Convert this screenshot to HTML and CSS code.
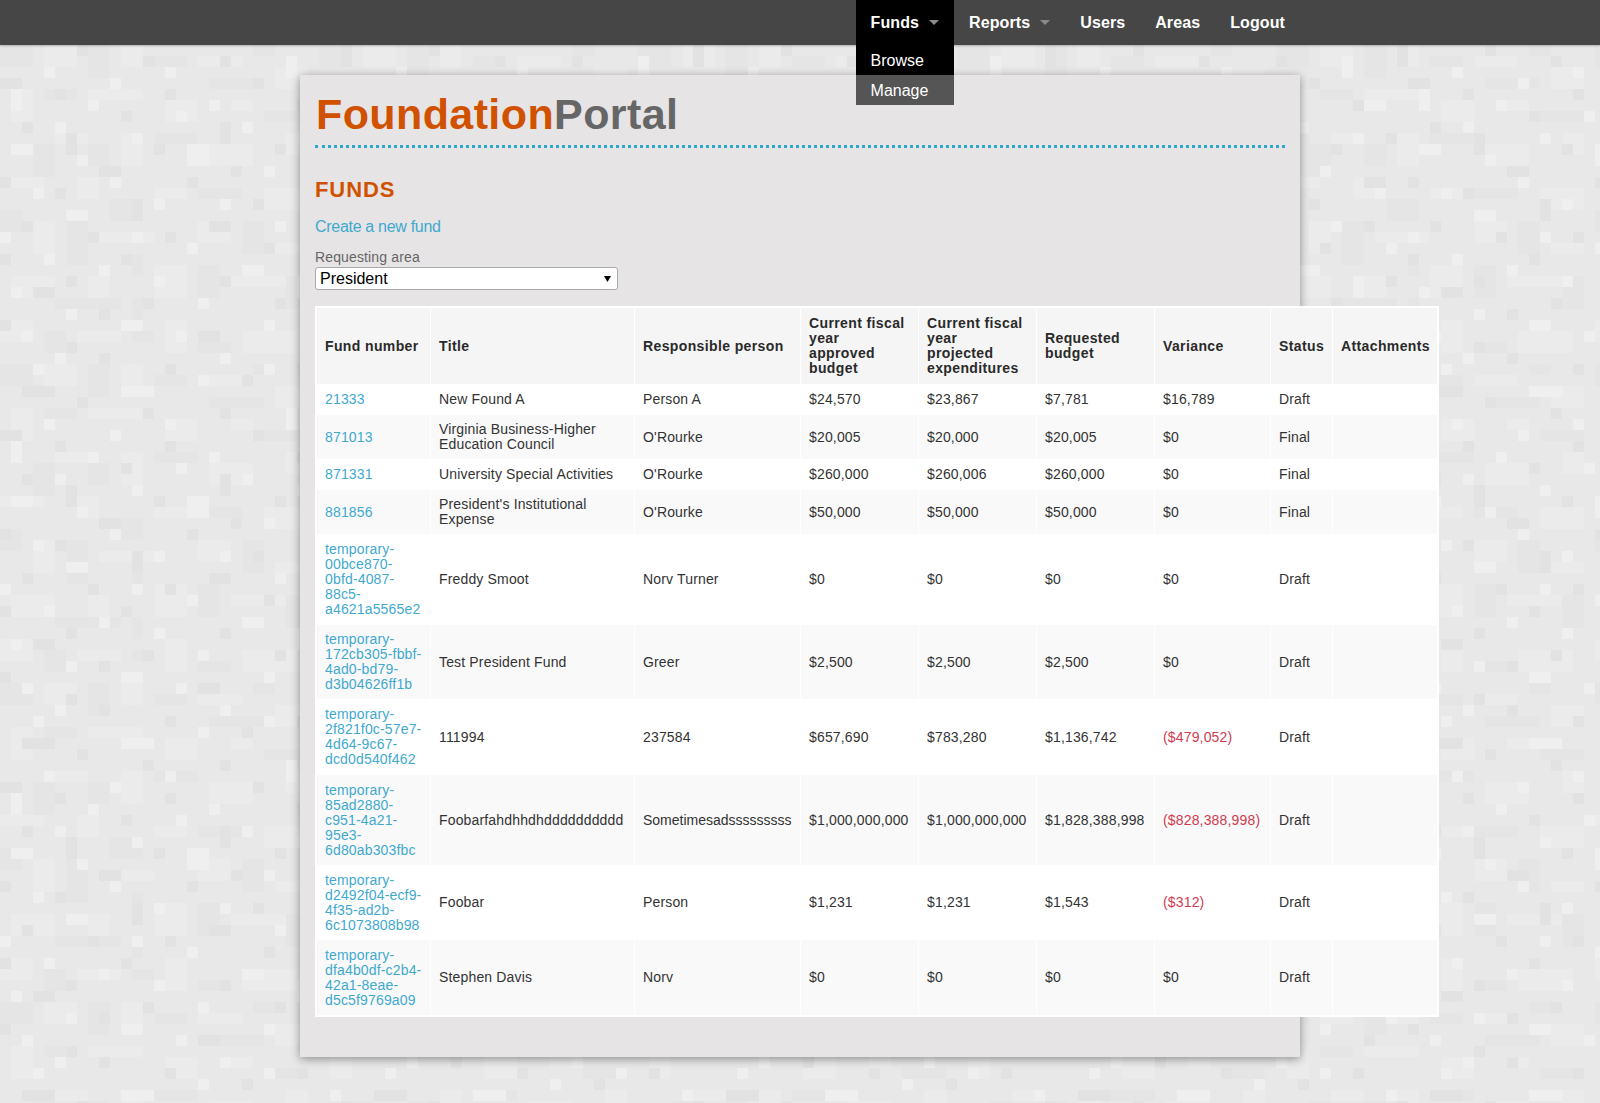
FILE: index.html
```html
<!DOCTYPE html>
<html lang="en">
<head>
<meta charset="utf-8">
<title>FoundationPortal - Funds</title>
<link rel="stylesheet" href="styles.css">
</head>
<body>
<nav class="topbar">
  <div class="topbar-inner">
    <ul class="menu">
      <li class="menu-item is-open">
        <a href="#" class="menu-link">Funds<span class="caret"></span></a>
        <ul class="dropdown">
          <li><a href="#" class="dropdown-link">Browse</a></li>
          <li><a href="#" class="dropdown-link is-hover">Manage</a></li>
        </ul>
      </li>
      <li class="menu-item"><a href="#" class="menu-link">Reports<span class="caret"></span></a></li>
      <li class="menu-item"><a href="#" class="menu-link">Users</a></li>
      <li class="menu-item"><a href="#" class="menu-link">Areas</a></li>
      <li class="menu-item"><a href="#" class="menu-link">Logout</a></li>
    </ul>
  </div>
</nav>

<main class="panel">
  <header class="brand"><span class="brand-a">Foundation</span><span class="brand-b">Portal</span></header>
  <h1 class="page-title">Funds</h1>
  <p class="create"><a href="#" class="link">Create a new fund</a></p>
  <label class="field-label" for="area">Requesting area</label>
  <select class="field-select" id="area"><option>President</option></select>

  <table class="funds">
    <colgroup>
      <col class="c1"><col class="c2"><col class="c3"><col class="c4"><col class="c5"><col class="c6"><col class="c7"><col class="c8"><col class="c9">
    </colgroup>
    <thead>
      <tr>
        <th>Fund number</th>
        <th>Title</th>
        <th>Responsible person</th>
        <th>Current fiscal<br>year<br>approved<br>budget</th>
        <th>Current fiscal<br>year<br>projected<br>expenditures</th>
        <th>Requested<br>budget</th>
        <th>Variance</th>
        <th>Status</th>
        <th>Attachments</th>
      </tr>
    </thead>
    <tbody>
      <tr class="h31"><td><a href="#" class="link">21333</a></td><td>New Found A</td><td>Person A</td><td>$24,570</td><td>$23,867</td><td>$7,781</td><td>$16,789</td><td>Draft</td><td></td></tr>
      <tr class="h44"><td><a href="#" class="link">871013</a></td><td>Virginia Business-Higher<br>Education Council</td><td>O'Rourke</td><td>$20,005</td><td>$20,000</td><td>$20,005</td><td>$0</td><td>Final</td><td></td></tr>
      <tr class="h31"><td><a href="#" class="link">871331</a></td><td>University Special Activities</td><td>O'Rourke</td><td>$260,000</td><td>$260,006</td><td>$260,000</td><td>$0</td><td>Final</td><td></td></tr>
      <tr class="h44"><td><a href="#" class="link">881856</a></td><td>President's Institutional<br>Expense</td><td>O'Rourke</td><td>$50,000</td><td>$50,000</td><td>$50,000</td><td>$0</td><td>Final</td><td></td></tr>
      <tr class="h91"><td><a href="#" class="link">temporary-<br>00bce870-<br>0bfd-4087-<br>88c5-<br>a4621a5565e2</a></td><td>Freddy Smoot</td><td>Norv Turner</td><td>$0</td><td>$0</td><td>$0</td><td>$0</td><td>Draft</td><td></td></tr>
      <tr class="h74"><td><a href="#" class="link">temporary-<br>172cb305-fbbf-<br>4ad0-bd79-<br>d3b04626ff1b</a></td><td>Test President Fund</td><td>Greer</td><td>$2,500</td><td>$2,500</td><td>$2,500</td><td>$0</td><td>Draft</td><td></td></tr>
      <tr class="h76"><td><a href="#" class="link">temporary-<br>2f821f0c-57e7-<br>4d64-9c67-<br>dcd0d540f462</a></td><td>111994</td><td>237584</td><td>$657,690</td><td>$783,280</td><td>$1,136,742</td><td class="neg">($479,052)</td><td>Draft</td><td></td></tr>
      <tr class="h90"><td><a href="#" class="link">temporary-<br>85ad2880-<br>c951-4a21-<br>95e3-<br>6d80ab303fbc</a></td><td>Foobarfahdhhdhdddddddddd</td><td class="tight">Sometimesadsssssssss</td><td>$1,000,000,000</td><td>$1,000,000,000</td><td>$1,828,388,998</td><td class="neg">($828,388,998)</td><td>Draft</td><td></td></tr>
      <tr class="h75"><td><a href="#" class="link">temporary-<br>d2492f04-ecf9-<br>4f35-ad2b-<br>6c1073808b98</a></td><td>Foobar</td><td>Person</td><td>$1,231</td><td>$1,231</td><td>$1,543</td><td class="neg">($312)</td><td>Draft</td><td></td></tr>
      <tr class="h75"><td><a href="#" class="link">temporary-<br>dfa4b0df-c2b4-<br>42a1-8eae-<br>d5c5f9769a09</a></td><td>Stephen Davis</td><td>Norv</td><td>$0</td><td>$0</td><td>$0</td><td>$0</td><td>Draft</td><td></td></tr>
    </tbody>
  </table>
</main>
</body>
</html>
```

FILE: styles.css
```css
* { box-sizing: border-box; }

html, body { margin: 0; padding: 0; }

body {
  min-height: 1103px;
  overflow: hidden;
  font-family: "Liberation Sans", Arial, sans-serif;
  font-size: 14px;
  color: #333;
  background-color: #e8e8e8;
  background-position: 0 1px, 0 1px;
  background-image:
    url("data:image/svg+xml,<svg xmlns='http://www.w3.org/2000/svg' width='352' height='352' viewBox='0 0 32 32' shape-rendering='crispEdges'><path fill='%23efefef' d='M5 0h1v1h-1zM20 0h1v1h-1zM3 1h1v1h-1zM24 1h1v1h-1zM18 2h1v1h-1zM11 3h3v1h-3zM30 3h1v1h-1zM4 6h1v1h-1zM15 6h1v1h-1zM26 5h1v2h-1zM10 7h1v1h-1zM1 8h1v2h-1zM19 9h1v1h-1zM8 9h1v1h-1zM28 9h2v1h-2zM16 10h1v1h-1zM5 11h1v1h-1zM22 11h1v1h-1zM12 12h1v1h-1zM1 13h2v1h-2zM17 13h2v2h-2zM27 12h1v1h-1zM7 14h1v1h-1zM24 15h1v1h-1zM10 16h1v1h-1zM3 17h1v1h-1zM14 18h1v1h-1zM29 17h1v1h-1zM20 18h1v1h-1zM6 19h2v1h-2zM25 20h1v1h-1zM0 21h1v1h-1zM12 21h1v1h-1zM17 22h1v1h-1zM30 22h1v1h-1zM4 23h1v1h-1zM9 24h1v1h-1zM22 24h2v1h-2zM14 25h1v1h-1zM27 25h1v2h-1zM1 26h1v1h-1zM18 27h1v1h-1zM6 28h1v1h-1zM11 29h2v1h-2zM24 29h1v1h-1zM30 28h1v1h-1zM2 30h1v1h-1zM16 30h1v1h-1z'/><path fill='%23e2e2e2' d='M9 0h1v1h-1zM15 1h1v1h-1zM2 3h3v1h-3zM22 2h1v1h-1zM27 1h1v1h-1zM13 5h1v1h-1zM7 4h1v1h-1zM20 5h1v1h-1zM31 4h1v2h-1zM0 7h2v1h-2zM5 8h1v1h-1zM15 8h1v1h-1zM23 7h1v1h-1zM11 10h1v1h-1zM27 9h1v1h-1zM2 11h1v1h-1zM20 11h1v2h-1zM6 12h1v2h-1zM14 13h1v1h-1zM30 12h1v1h-1zM25 13h1v1h-1zM9 15h2v1h-2zM0 16h1v1h-1zM17 16h1v1h-1zM21 15h1v1h-1zM5 17h1v1h-1zM28 16h2v1h-2zM12 18h1v2h-1zM23 18h1v1h-1zM2 20h1v1h-1zM8 21h1v1h-1zM19 20h2v1h-2zM28 20h1v1h-1zM15 21h1v1h-1zM24 22h1v1h-1zM0 23h1v1h-1zM11 23h1v1h-1zM6 25h1v1h-1zM20 25h1v1h-1zM30 25h1v1h-1zM3 26h2v1h-2zM13 27h1v1h-1zM25 27h1v1h-1zM9 28h1v1h-1zM0 29h1v1h-1zM18 30h2v1h-2zM28 30h1v1h-1zM6 31h1v1h-1z'/></svg>"),
    url("data:image/svg+xml,<svg xmlns='http://www.w3.org/2000/svg' width='319' height='319' viewBox='0 0 29 29' shape-rendering='crispEdges'><path fill='%23ebebeb' d='M0 0h3v2h-3zM7 1h4v1h-4zM15 0h2v3h-2zM22 1h5v2h-5zM4 4h3v2h-3zM11 4h2v2h-2zM18 5h4v1h-4zM25 6h3v2h-3zM1 8h2v3h-2zM8 8h5v1h-5zM15 9h3v2h-3zM21 9h2v1h-2zM5 12h3v1h-3zM11 12h2v3h-2zM19 13h4v2h-4zM26 12h2v2h-2zM0 16h4v1h-4zM7 16h2v2h-2zM14 17h3v1h-3zM24 17h4v2h-4zM3 20h2v3h-2zM9 21h5v1h-5zM18 20h3v2h-3zM25 22h3v1h-3zM1 25h4v2h-4zM8 25h2v2h-2zM14 24h3v3h-3zM21 25h5v1h-5z'/><path fill='%23e5e5e5' d='M4 1h2v2h-2zM12 1h2v1h-2zM18 2h3v1h-3zM0 4h3v2h-3zM8 4h2v3h-2zM14 5h3v1h-3zM23 4h2v1h-2zM4 8h3v1h-3zM19 7h5v1h-5zM14 12h4v1h-4zM3 13h2v3h-2zM8 13h2v2h-2zM24 10h4v1h-4zM10 18h3v2h-3zM18 17h4v1h-4zM0 19h2v2h-2zM6 20h2v4h-2zM22 20h2v3h-2zM12 23h1v2h-1zM18 24h2v3h-2zM26 25h2v3h-2zM5 27h6v1h-6zM12 27h1v2h-1z'/></svg>");
}

/* Top bar */
.topbar {
  height: 45px;
  background: #464646;
  box-shadow: 0 1px 2px rgba(0, 0, 0, .25);
}

.topbar-inner {
  width: 1000px;
  margin-left: 300px;
}

.menu {
  display: flex;
  justify-content: flex-end;
  margin: 0;
  padding: 0;
  list-style: none;
}

.menu-item { position: relative; }

.menu-link {
  display: flex;
  align-items: center;
  height: 45px;
  padding: 0 15px;
  color: #fff;
  font-size: 16px;
  font-weight: bold;
  letter-spacing: .1px;
  text-decoration: none;
}

.is-open .menu-link { background: #000; }

.caret {
  width: 0;
  height: 0;
  margin-left: 10px;
  border-left: 5px solid transparent;
  border-right: 5px solid transparent;
  border-top: 5px solid #8a8a8a;
}

.dropdown {
  position: absolute;
  top: 45px;
  left: 0;
  right: 0;
  z-index: 2;
  margin: 0;
  padding: 0;
  list-style: none;
  background: #000;
}

.dropdown-link {
  display: block;
  height: 30px;
  padding: 1px 15px 0;
  line-height: 30px;
  font-size: 16px;
  color: #fff;
  text-decoration: none;
}

.dropdown-link.is-hover { background: #555; }

/* Panel */
.panel {
  width: 1000px;
  height: 982px;
  margin: 30px 0 0 300px;
  padding: 0 15px;
  background: #e6e4e5;
  box-shadow: 0 2px 9px rgba(0, 0, 0, .4);
}

.brand {
  height: 73px;
  padding: 14px 0 0 1px;
  border-bottom: 3px dotted #2aa9cc;
  font-size: 43px;
  line-height: 50px;
  font-weight: bold;
  letter-spacing: .4px;
}

.brand-a { color: #d05200; }
.brand-b { color: #666; }

.page-title {
  margin: 29px 0 0;
  font-size: 22px;
  line-height: 26px;
  font-weight: bold;
  text-transform: uppercase;
  letter-spacing: .9px;
  color: #d05200;
}

.create {
  margin: 13px 0 0;
  font-size: 16px;
  line-height: 22px;
  letter-spacing: -.3px;
}

.link { color: #3fa9cf; text-decoration: none; }

.funds .link { letter-spacing: .16px; }

.field-label {
  display: block;
  margin-top: 9px;
  font-size: 14px;
  line-height: 20px;
  letter-spacing: .14px;
  color: #666;
}

.field-select {
  display: block;
  width: 303px;
  height: 23px;
  padding: 0 4px;
  border: 1px solid #aaa;
  border-radius: 3px;
  appearance: none;
  font-family: "Liberation Sans", Arial, sans-serif;
  font-size: 16px;
  color: #000;
  background: #fff url("data:image/svg+xml,<svg xmlns='http://www.w3.org/2000/svg' width='7' height='7'><path d='M0 1h7L3.5 7z'/></svg>") no-repeat right 6px center;
}

/* Table */
.funds {
  width: 1124px;
  margin-top: 16px;
  table-layout: fixed;
  border-collapse: separate;
  border-spacing: 0;
  border: 2px solid #fff;
  background: #fff;
}

.c1 { width: 114px; }
.c2 { width: 204px; }
.c3 { width: 166px; }
.c4, .c5, .c6 { width: 118px; }
.c7 { width: 116px; }
.c8 { width: 62px; }
.c9 { width: 104px; }

.funds th, .funds td {
  padding: 7px 8px;
  border-right: 1px solid #fff;
  line-height: 15px;
  vertical-align: middle;
  text-align: left;
  white-space: nowrap;
}

.funds td { letter-spacing: .16px; }

.funds .tight { letter-spacing: 0; }

.funds th:last-child, .funds td:last-child { border-right: 0; }

.funds th {
  height: 76px;
  font-weight: bold;
  letter-spacing: .38px;
  color: #2a2a2a;
  background: #f5f5f5;
}

.funds tbody tr:nth-child(even) td { background: #f9f9f9; }

.h31 td { height: 31px; }
.h44 td { height: 44px; }
.h74 td { height: 74px; }
.h75 td { height: 75px; }
.h76 td { height: 76px; }
.h90 td { height: 90px; }
.h91 td { height: 91px; }

.neg { color: #cf3b50; }
```
